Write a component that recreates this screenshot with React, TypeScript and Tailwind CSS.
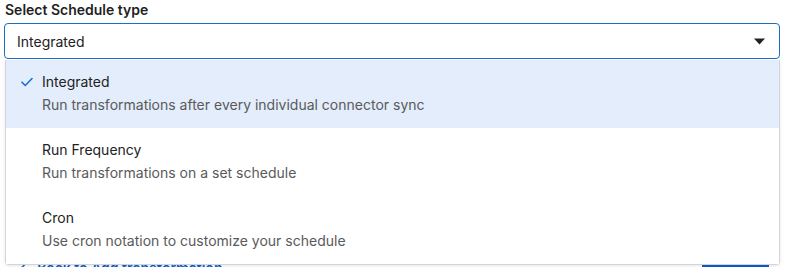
import React from 'react';

const options = [
  { id: 'integrated', title: 'Integrated', desc: 'Run transformations after every individual connector sync' },
  { id: 'frequency', title: 'Run Frequency', desc: 'Run transformations on a set schedule' },
  { id: 'cron', title: 'Cron', desc: 'Use cron notation to customize your schedule' },
];

const App: React.FC = () => {
  const [selected] = React.useState('integrated');
  const current = options.find((o) => o.id === selected);

  return (
    <div className="w-[791px] h-[267px] overflow-hidden bg-white font-['Inter','Liberation_Sans',sans-serif] text-[#222]">
      <div className="pl-[4px] pr-[11px]">
        <label className="block pl-[1px] text-[14px] leading-[20px] font-semibold text-[#1f1f1f]">
          Select Schedule type
        </label>

        <div className="relative mt-[3px]">
          {/* Select trigger */}
          <button className="w-full h-[36px] flex items-center justify-between pl-[12px] pr-[14px] border border-[#1b6fc6] rounded-[4px] bg-white text-left">
            <span className="text-[14px] text-[#222]">{current?.title}</span>
            <svg width="11" height="7" viewBox="0 0 11 7" className="text-[#222]">
              <path d="M0 0.5 L11 0.5 L5.5 6.5 Z" fill="currentColor" />
            </svg>
          </button>

          {/* Menu */}
          <div className="absolute left-[1px] right-0 top-[calc(100%+1px)] z-10 bg-white border border-[#d4d4d8] border-t-0 rounded-b-[4px] shadow-[0_2px_4px_rgba(0,0,0,0.08)]">
            {options.map((opt) => (
              <div
                key={opt.id}
                className={`flex pl-[15px] pt-[12px] pb-[13px] ${opt.id === selected ? 'bg-[#e3edfc]' : 'bg-white'}`}
              >
                <div className="w-[21px] h-[20px] flex items-center">
                  {opt.id === selected && (
                    <svg width="12" height="10" viewBox="0 0 12 10" fill="none">
                      <path d="M1 5.2 L4.3 8.5 L11 1.5" stroke="#1a6fd8" strokeWidth="1.6" strokeLinecap="round" strokeLinejoin="round" />
                    </svg>
                  )}
                </div>
                <div className="flex flex-col gap-[3px]">
                  <span className="text-[14px] leading-[20px] text-[#222]">{opt.title}</span>
                  <span className="text-[14px] leading-[20px] text-[#5a5a5a]">{opt.desc}</span>
                </div>
              </div>
            ))}
          </div>
        </div>

        {/* Content behind the menu */}
        <div className="mt-[196px] flex items-start justify-between">
          <a className="ml-[14px] mt-[3px] flex items-center gap-[6px] text-[14px] leading-[20px] font-semibold text-[#0b5fcc]">
            <span>←</span> Back to Add transformation
          </a>
          <button className="mr-[11px] mt-[5px] w-[67px] h-[32px] rounded-[2px] bg-[#0b5fcc] text-white text-[14px] font-semibold">
            Save
          </button>
        </div>
      </div>
    </div>
  );
};

export default App;
